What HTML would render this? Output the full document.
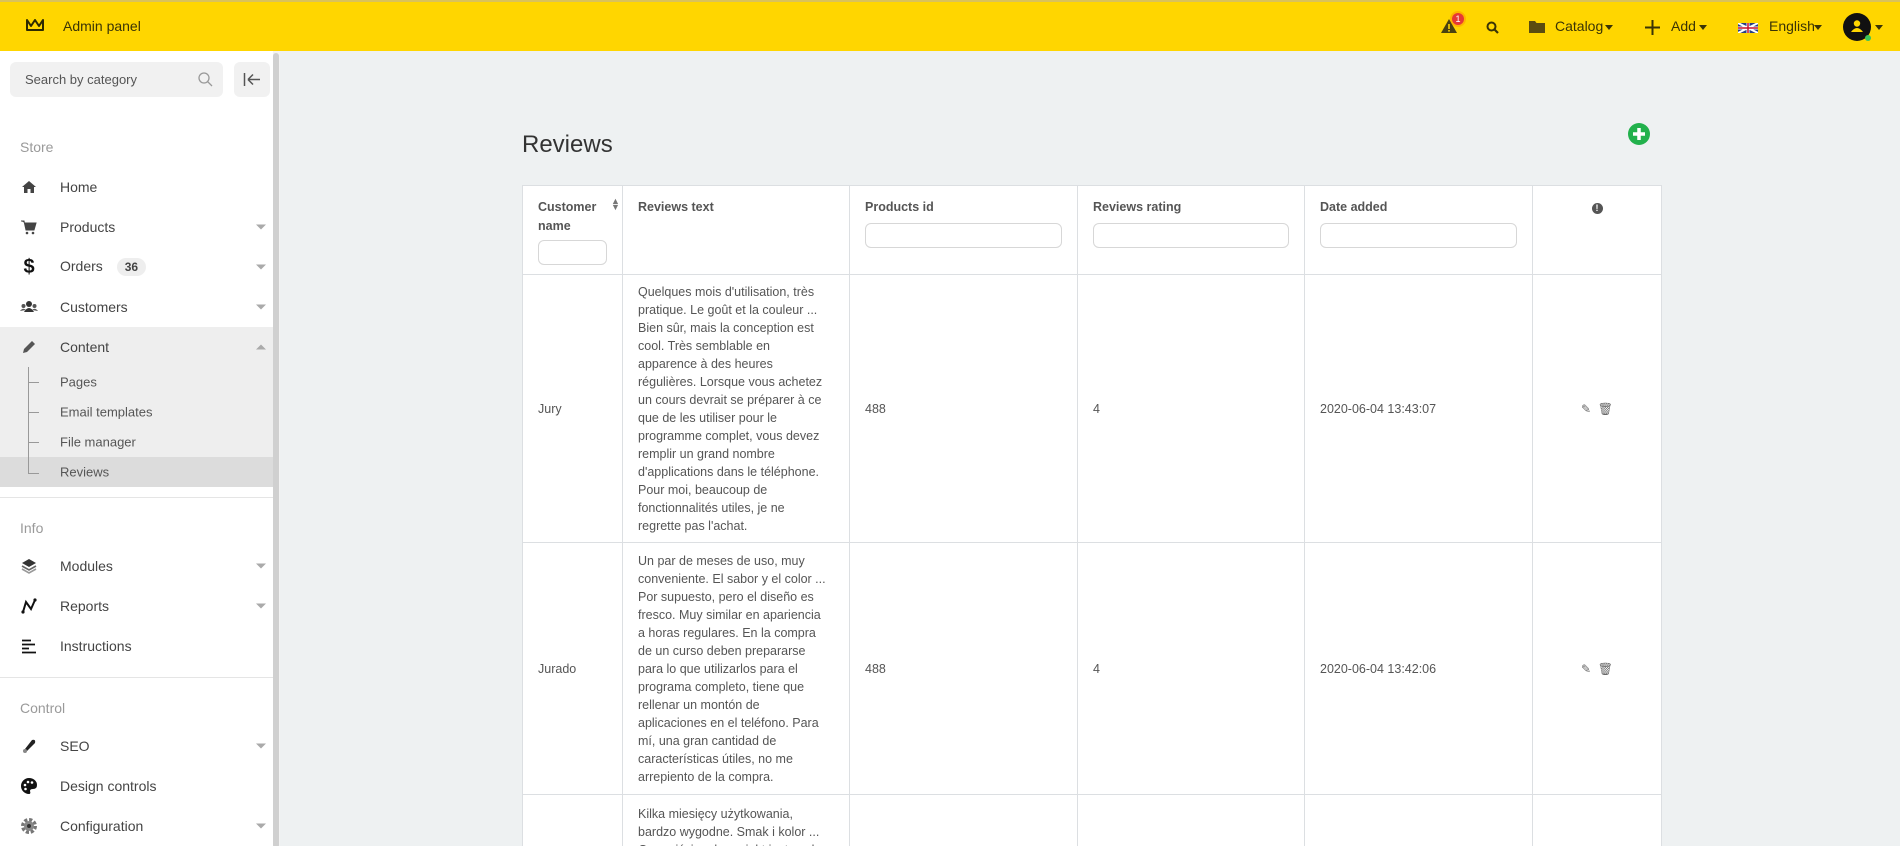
<!DOCTYPE html>
<html><head><meta charset="utf-8"><style>
*{box-sizing:border-box;margin:0;padding:0}
html{width:1900px;height:846px;overflow:hidden}
body{width:1900px;height:846px;overflow:hidden;background:#eef1f2;font-family:"Liberation Sans",sans-serif;color:#495057;position:relative}
#wrap{position:absolute;left:0;top:0;width:1900px;height:846px;overflow:hidden}
.hdr{position:absolute;left:0;top:0;width:1900px;height:51px;background:#ffd600;border-top:2px solid #d9c25a;z-index:2}
.hdr .t{position:absolute;top:0;height:49px;line-height:49px;font-size:14px;color:#3a3406}
.side{position:absolute;left:0;top:51px;width:273px;height:795px;background:#fff}
.sb{position:absolute;left:273px;top:51px;width:7px;height:795px;background:#f3f3f3}
.sb i{position:absolute;left:0;top:2px;width:6px;height:795px;background:#d0d0d0;border-radius:3px}
.srch{position:absolute;left:10px;top:62px;width:213px;height:35px;background:#f1f1f1;border-radius:6px;font-size:13px;color:#555;line-height:35px;padding-left:15px}
.coll{position:absolute;left:234px;top:62px;width:36px;height:35px;background:#f1f1f1;border-radius:6px}
.lbl{position:absolute;left:20px;font-size:14px;color:#9a9a9a}
.it{position:absolute;left:60px;font-size:14px;color:#444;transform:translateY(-50%)}
.ic{position:absolute;left:20px;width:18px;height:18px;transform:translateY(-50%)}
.car{position:absolute;left:256px;width:0;height:0;border-left:5px solid transparent;border-right:5px solid transparent;border-top:5px solid #aaa;transform:translateY(-50%)}
.sub{position:absolute;left:60px;font-size:13px;color:#555;transform:translateY(-50%)}
.div{position:absolute;left:0;width:273px;height:1px;background:#e5e5e5}
table{position:absolute;left:522px;top:185px;border-collapse:collapse;background:#fff;font-size:12.5px;color:#555}
td,th{border:1px solid #dcdfe2;padding:0 15px;vertical-align:middle;text-align:left}
th{vertical-align:top;font-weight:bold;color:#555;padding-top:12px;font-size:12.5px;line-height:19px;position:relative}
th input{display:block;margin-top:6px;height:25px;border:1px solid #d7d7d7;border-radius:6px;width:100%;background:#fff}
.rt{line-height:18px;white-space:nowrap}
</style></head><body><div id="wrap">
<div class="hdr">
 <svg style="position:absolute;left:25px;top:15px" width="20" height="16" viewBox="0 0 20 16"><path d="M2 3 L6 9 L10 3 L14 9 L18 3 L18 13 L2 13 Z" fill="none" stroke="#2d2a00" stroke-width="2" stroke-linejoin="round"/></svg>
 <div class="t" style="left:63px">Admin panel</div>
 <svg style="position:absolute;left:1441px;top:17px" width="16" height="14" viewBox="0 0 16 14"><path d="M8 0 L16 14 L0 14 Z" fill="#4a4210"/><rect x="7.2" y="5" width="1.6" height="5" fill="#ffd600"/><rect x="7.2" y="11" width="1.6" height="1.6" fill="#ffd600"/></svg>
 <div style="position:absolute;left:1452px;top:11px;width:12px;height:12px;border-radius:50%;background:#e53935;color:#fff;font-size:9px;text-align:center;line-height:12px;box-shadow:0 0 0 2px rgba(255,120,0,.35)">1</div>
 <svg style="position:absolute;left:1486px;top:19px" width="13" height="13" viewBox="0 0 13 13"><circle cx="5.5" cy="5.5" r="4" fill="none" stroke="#3a3406" stroke-width="2"/><path d="M8.5 8.5 L12 12" stroke="#3a3406" stroke-width="2.2"/></svg>
 <svg style="position:absolute;left:1529px;top:18px" width="16" height="13" viewBox="0 0 16 13"><path d="M0 1 H6 L7.5 3 H16 V13 H0 Z" fill="#5a4c10"/></svg>
 <div class="t" style="left:1555px">Catalog</div>
 <div style="position:absolute;left:1605px;top:23px;border-left:4px solid transparent;border-right:4px solid transparent;border-top:5px solid #3a3406"></div>
 <svg style="position:absolute;left:1645px;top:18px" width="15" height="15" viewBox="0 0 15 15"><path d="M7.5 0 V15 M0 7.5 H15" stroke="#3a3406" stroke-width="2"/></svg>
 <div class="t" style="left:1671px">Add</div>
 <div style="position:absolute;left:1699px;top:23px;border-left:4px solid transparent;border-right:4px solid transparent;border-top:5px solid #3a3406"></div>
 <svg style="position:absolute;left:1738px;top:21px" width="20" height="10" viewBox="0 0 20 10"><rect width="20" height="10" fill="#283f85"/><path d="M0 0 L20 10 M20 0 L0 10" stroke="#fff" stroke-width="2"/><path d="M10 0 V10 M0 5 H20" stroke="#fff" stroke-width="3"/><path d="M10 0 V10 M0 5 H20" stroke="#c8102e" stroke-width="1.5"/></svg>
 <div class="t" style="left:1769px">English</div>
 <div style="position:absolute;left:1814px;top:23px;border-left:4px solid transparent;border-right:4px solid transparent;border-top:5px solid #3a3406"></div>
 <div style="position:absolute;left:1843px;top:11px;width:28px;height:28px;border-radius:50%;background:#111"></div>
 <svg style="position:absolute;left:1849px;top:16px" width="16" height="16" viewBox="0 0 16 16"><circle cx="8" cy="5.5" r="3.2" fill="#ffd600"/><path d="M2 14 Q8 6 14 14 Z" fill="#ffd600"/></svg>
 <div style="position:absolute;left:1865px;top:33px;width:6px;height:6px;border-radius:50%;background:#3ac45c"></div>
 <div style="position:absolute;left:1875px;top:23px;border-left:4px solid transparent;border-right:4px solid transparent;border-top:5px solid #3a3406"></div>
</div>

<div class="side"></div>
<div class="srch">Search by category
 <svg style="position:absolute;left:188px;top:10px" width="15" height="15" viewBox="0 0 15 15"><circle cx="6" cy="6" r="5" fill="none" stroke="#999" stroke-width="1.3"/><path d="M9.7 9.7 L14 14" stroke="#999" stroke-width="1.3"/></svg>
</div>
<div class="coll"><svg style="position:absolute;left:9px;top:10px" width="18" height="15" viewBox="0 0 18 15"><path d="M1.5 1 V14 M5 7.5 H17 M5 7.5 L10 2.5 M5 7.5 L10 12.5" stroke="#555" stroke-width="1.5" fill="none"/></svg></div>

<div class="lbl" style="top:139px">Store</div>
<div style="position:absolute;left:0;top:327px;width:273px;height:160px;background:#eeeeee"></div>
<div style="position:absolute;left:0;top:457px;width:273px;height:30px;background:#dcdcdc"></div>

<svg class="ic" style="top:187px" viewBox="0 0 18 18"><path d="M2 9 L9 3 L16 9 L14 9 L14 15 L10.5 15 L10.5 11 L7.5 11 L7.5 15 L4 15 L4 9 Z" fill="#444"/></svg><div class="it" style="top:187px">Home</div>
<svg class="ic" style="top:227px" viewBox="0 0 18 18"><path d="M1 3 H4 L6 12 H14 L16 5 H5" fill="#444" stroke="#444"/><circle cx="7" cy="15" r="1.3" fill="#444"/><circle cx="13" cy="15" r="1.3" fill="#444"/></svg><div class="it" style="top:227px">Products</div><div class="car" style="top:227px"></div>
<div class="ic" style="top:267px;font-size:20px;font-weight:bold;color:#111;text-align:center;line-height:18px">$</div><div class="it" style="top:267px">Orders <span style="display:inline-block;margin-left:10px;background:#eee;border-radius:9px;padding:2px 8px;font-size:12px;font-weight:bold;color:#444">36</span></div><div class="car" style="top:267px"></div>
<svg class="ic" style="top:307px" viewBox="0 0 18 18"><circle cx="9" cy="6" r="3" fill="#333"/><path d="M4 14 Q9 6 14 14 Z" fill="#333"/><circle cx="3.5" cy="8" r="2" fill="#555"/><circle cx="14.5" cy="8" r="2" fill="#555"/><path d="M0 13 Q3 9 6 12 Z M18 13 Q15 9 12 12 Z" fill="#555"/></svg><div class="it" style="top:307px">Customers</div><div class="car" style="top:307px"></div>
<svg class="ic" style="top:347px" viewBox="0 0 18 18"><path d="M3 15 L4 11 L12 3 L15 6 L7 14 Z" fill="#555"/></svg><div class="it" style="top:347px">Content</div><div class="car" style="top:347px;border-top:none;border-bottom:5px solid #aaa"></div>
<div style="position:absolute;left:28px;top:367px;width:1px;height:106px;background:#999"></div>
<div style="position:absolute;left:28px;top:382px;width:11px;height:1px;background:#999"></div>
<div style="position:absolute;left:28px;top:412px;width:11px;height:1px;background:#999"></div>
<div style="position:absolute;left:28px;top:442px;width:11px;height:1px;background:#999"></div>
<div style="position:absolute;left:28px;top:473px;width:11px;height:1px;background:#999"></div>
<div class="sub" style="top:382px">Pages</div>
<div class="sub" style="top:412px">Email templates</div>
<div class="sub" style="top:442px">File manager</div>
<div class="sub" style="top:472px">Reviews</div>
<div class="div" style="top:497px"></div>
<div class="lbl" style="top:520px">Info</div>
<svg class="ic" style="top:566px" viewBox="0 0 18 18"><path d="M9 2 L16 6 L9 10 L2 6 Z" fill="#333"/><path d="M2 9 L9 13 L16 9" stroke="#666" stroke-width="1.6" fill="none"/><path d="M2 12 L9 16 L16 12" stroke="#999" stroke-width="1.6" fill="none"/></svg><div class="it" style="top:566px">Modules</div><div class="car" style="top:566px"></div>
<svg class="ic" style="top:606px" viewBox="0 0 18 18"><path d="M3 15 L6 5 L11 12 L15 3" stroke="#111" stroke-width="2" fill="none"/><circle cx="3" cy="15" r="1.6" fill="#111"/><circle cx="15" cy="3" r="1.6" fill="#111"/></svg><div class="it" style="top:606px">Reports</div><div class="car" style="top:606px"></div>
<svg class="ic" style="top:646px" viewBox="0 0 18 18"><path d="M2 3.5 H11 M2 7.5 H15 M2 11.5 H9 M2 15.5 H16" stroke="#111" stroke-width="1.8"/></svg><div class="it" style="top:646px">Instructions</div>
<div class="div" style="top:677px"></div>
<div class="lbl" style="top:700px">Control</div>
<svg class="ic" style="top:746px" viewBox="0 0 18 18"><path d="M5 12 L12 3 Q16 2 15 6 L7 14 Z" fill="#222"/><circle cx="5" cy="14" r="2" fill="#888"/></svg><div class="it" style="top:746px">SEO</div><div class="car" style="top:746px"></div>
<svg class="ic" style="top:786px" viewBox="0 0 18 18"><path d="M9 1 A8 8 0 1 0 9 17 Q11 17 10 14 Q10 12 13 12 Q17 12 17 8 A8 7 0 0 0 9 1 Z" fill="#111"/><circle cx="5" cy="8" r="1.3" fill="#fff"/><circle cx="8" cy="5" r="1.3" fill="#fff"/><circle cx="12" cy="5.5" r="1.3" fill="#fff"/><circle cx="5.5" cy="12" r="1.3" fill="#fff"/></svg><div class="it" style="top:786px">Design controls</div>
<svg class="ic" style="top:826px" viewBox="0 0 18 18"><circle cx="9" cy="9" r="6" fill="none" stroke="#777" stroke-width="4" stroke-dasharray="3 1.7"/><circle cx="9" cy="9" r="5" fill="#888"/><circle cx="9" cy="9" r="2" fill="#333"/></svg><div class="it" style="top:826px">Configuration</div><div class="car" style="top:826px"></div>
<div class="sb"><i></i></div>

<div style="position:absolute;left:522px;top:131px;font-size:24px;font-weight:500;color:#333">Reviews</div>
<svg style="position:absolute;left:1628px;top:123px" width="22" height="22" viewBox="0 0 22 22"><circle cx="11" cy="11" r="11" fill="#22b14c"/><path d="M11 5 V17 M5 11 H17" stroke="#fff" stroke-width="3.5"/></svg>

<table>
<tr style="height:89px">
<th style="width:100px">Customer<br>name<input style="width:69px;margin-top:4px"><div style="position:absolute;left:88px;top:12px;font-size:9px;line-height:6px;color:#777">▲<br>▼</div></th>
<th style="width:227px">Reviews text</th>
<th style="width:228px">Products id<input></th>
<th style="width:227px">Reviews rating<input></th>
<th style="width:228px">Date added<input></th>
<th style="width:129px;text-align:center"><span style="display:inline-block;width:11px;height:11px;border-radius:50%;background:#555;color:#fff;font-size:9px;line-height:11px;text-align:center">!</span></th>
</tr>
<tr style="height:268px">
<td>Jury</td>
<td class="rt">Quelques mois d'utilisation, très<br>pratique. Le goût et la couleur ...<br>Bien sûr, mais la conception est<br>cool. Très semblable en<br>apparence à des heures<br>régulières. Lorsque vous achetez<br>un cours devrait se préparer à ce<br>que de les utiliser pour le<br>programme complet, vous devez<br>remplir un grand nombre<br>d'applications dans le téléphone.<br>Pour moi, beaucoup de<br>fonctionnalités utiles, je ne<br>regrette pas l'achat.</td>
<td>488</td><td>4</td><td>2020-06-04 13:43:07</td>
<td style="text-align:center;color:#666;font-size:12px">&#9998;&nbsp;&nbsp;&#128465;</td>
</tr>
<tr style="height:252px">
<td>Jurado</td>
<td class="rt">Un par de meses de uso, muy<br>conveniente. El sabor y el color ...<br>Por supuesto, pero el diseño es<br>fresco. Muy similar en apariencia<br>a horas regulares. En la compra<br>de un curso deben prepararse<br>para lo que utilizarlos para el<br>programa completo, tiene que<br>rellenar un montón de<br>aplicaciones en el teléfono. Para<br>mí, una gran cantidad de<br>características útiles, no me<br>arrepiento de la compra.</td>
<td>488</td><td>4</td><td>2020-06-04 13:42:06</td>
<td style="text-align:center;color:#666;font-size:12px">&#9998;&nbsp;&nbsp;&#128465;</td>
</tr>
<tr style="height:60px">
<td></td>
<td class="rt" style="vertical-align:top;padding-top:10px">Kilka miesięcy użytkowania,<br>bardzo wygodne. Smak i kolor ...<br>Oczywiście, ale projekt jest cool.</td>
<td></td><td></td><td></td><td></td>
</tr>
</table>
</div></body></html>
